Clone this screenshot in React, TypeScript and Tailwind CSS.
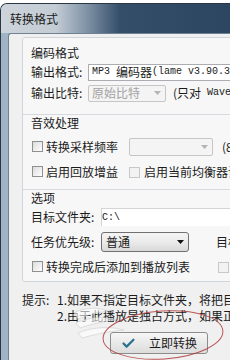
import { Check } from 'lucide-react';

const cjk = "font-['Noto_Sans_CJK_SC',sans-serif]";
const mono = "font-['Liberation_Mono','Noto_Sans_CJK_SC',monospace] text-[10px] whitespace-pre";

function CheckBox({ disabled }: { disabled?: boolean }) {
  return (
    <span
      className={
        'inline-block w-[11px] h-[11px] shrink-0 border ' +
        (disabled
          ? 'border-[#c8c8c8] bg-[#f2f2f2]'
          : 'border-[#8e8f8f] bg-gradient-to-br from-[#dcdcdc] to-[#ffffff]')
      }
    />
  );
}

function Arrow({ dim }: { dim?: boolean }) {
  return (
    <svg width="7" height="4" viewBox="0 0 7 4" className="shrink-0">
      <path d="M0 0h7L3.5 4z" fill={dim ? '#b4b4b4' : '#111'} />
    </svg>
  );
}

function Section({ title, children, last }: { title: string; children: React.ReactNode; last?: boolean }) {
  return (
    <div className={'pl-[8px] ' + (last ? '' : 'border-b border-[#d6dadf]')}>
      <div className="h-[16px] flex items-center text-[12px] leading-none">{title}</div>
      {children}
    </div>
  );
}

export default function App() {
  return (
    <div className={`relative w-[230px] h-[360px] overflow-hidden bg-white text-[#1b1b1b] ${cjk}`}>
      <div className="mt-[3px] h-[357px] flex flex-col rounded-tl-[7px] border-t border-l border-[#2a3846] bg-gradient-to-r from-[#9fb3c4] via-[#b9cad8] to-[#a9bccc] overflow-hidden">
        {/* title bar */}
        <div className="h-[29px] shrink-0 flex items-center pl-[9px] text-[12px] leading-none bg-[linear-gradient(90deg,#cdd4da_0%,#c3ccd4_24%,#7d90a4_38%,#344d69_52%,#2c4561_100%)]">
          转换格式
        </div>
        <div className="flex flex-1 min-h-0">
          <div className="w-[7px] shrink-0" />
          <div className="flex-1 min-w-0 bg-[#f0f0f0] border-l border-t border-[#6f8294] rounded-tl-[3px] flex flex-col">
            {/* group box */}
            <div className="ml-[13px] mt-[3px] w-[240px] border border-[#d0d5da] rounded-[3px] bg-[#f7f7f7] pt-[7px]">
              <Section title="编码格式">
                <div className="mt-[2px] h-[18px] flex items-center text-[12px] leading-none">
                  <span className="w-[57px] shrink-0">输出格式:</span>
                  <div className="flex-1 h-[17px] border border-[#abadb3] bg-white flex items-center pl-[3px] whitespace-nowrap">
                    <span className={mono}>MP3 </span>
                    <span className="text-[12px]">编码器</span>
                    <span className={mono}>(lame v3.90.3</span>
                  </div>
                </div>
                <div className="mt-[3px] h-[18px] flex items-center text-[12px] leading-none whitespace-nowrap">
                  <span className="w-[57px] shrink-0">输出比特:</span>
                  <div className="w-[78px] h-[17px] shrink-0 border border-[#c6c6c6] bg-[#f4f4f4] rounded-[2px] flex items-center pl-[3px] pr-[4px] text-[#a3a3a3]">
                    <span className="flex-1">原始比特</span>
                    <Arrow dim />
                  </div>
                  <span className="ml-[7px]">(</span>
                  <span>只对</span>
                  <span className={mono}> Wave</span>
                </div>
                <div className="h-[12px]" />
              </Section>
              <Section title="音效处理">
                <div className="h-[5px]" />
                <div className="mt-[2px] h-[18px] flex items-center text-[12px] leading-none whitespace-nowrap">
                  <span className="ml-[1px]"><CheckBox /></span>
                  <span className="ml-[3px] w-[83px] shrink-0">转换采样频率</span>
                  <div className="w-[84px] h-[18px] shrink-0 border border-[#c6c6c6] bg-[#f4f4f4] rounded-[2px] flex items-center justify-end pr-[4px]">
                    <Arrow dim />
                  </div>
                  <span className="ml-[9px]">(8</span>
                </div>
                <div className="mt-[7px] h-[18px] flex items-center text-[12px] leading-none whitespace-nowrap">
                  <span className="ml-[1px]"><CheckBox /></span>
                  <span className="ml-[3px] w-[83px] shrink-0">启用回放增益</span>
                  <CheckBox disabled />
                  <span className="ml-[4px]">启用当前均衡器设</span>
                </div>
                <div className="h-[8px]" />
              </Section>
              <Section title="选项" last>
                <div className="mt-[2px] h-[18px] flex items-center text-[12px] leading-none whitespace-nowrap">
                  <span className="w-[70px] shrink-0">目标文件夹:</span>
                  <div className="flex-1 h-[18px] border-t border-l border-[#d2d4d8] bg-white flex items-center">
                    <span className={mono}>C:\</span>
                  </div>
                </div>
                <div className="mt-[6px] h-[20px] flex items-center text-[12px] leading-none whitespace-nowrap">
                  <span className="w-[70px] shrink-0">任务优先级:</span>
                  <div className="w-[88px] h-[20px] shrink-0 border border-[#707070] rounded-[3px] bg-gradient-to-b from-[#f4f4f4] via-[#ebebeb] to-[#d8d8d8] flex items-center pl-[4px] pr-[4px]">
                    <span className="flex-1">普通</span>
                    <Arrow />
                  </div>
                  <span className="ml-[27px]">目标</span>
                </div>
                <div className="mt-[6px] h-[18px] flex items-center text-[12px] leading-none whitespace-nowrap">
                  <span className="ml-[1px]"><CheckBox /></span>
                  <span className="ml-[3px] w-[172px] shrink-0">转换完成后添加到播放列表</span>
                  <CheckBox disabled />
                </div>
                <div className="h-[5px]" />
              </Section>
            </div>
            {/* hints */}
            <div className="mt-[10px] ml-[13px] text-[12px] leading-[16px] whitespace-nowrap">
              <div className="flex">
                <span className="w-[35px] shrink-0">提示:</span>
                <span>1.如果不指定目标文件夹，将把目</span>
              </div>
              <div className="flex">
                <span className="w-[35px] shrink-0" />
                <span>2.由于此播放是独占方式，如果正</span>
              </div>
            </div>
            {/* button */}
            <div className="mt-[8px] ml-[101px] w-[98px] h-[22px] border border-[#8c8c8c] rounded-[3px] bg-gradient-to-b from-[#f6f6f6] to-[#dcdcdc] flex items-center pl-[10px] text-[12px] leading-none">
              <Check size={15} strokeWidth={3.5} className="text-[#2a6f8e]" />
              <span className="ml-[13px]">立即转换</span>
            </div>
          </div>
        </div>
      </div>
      {/* watermark */}
      <svg className="absolute left-[68px] top-[305px] pointer-events-none" width="70" height="36" viewBox="0 0 70 36">
        <g fill="#ffffff" fillOpacity="0.6" stroke="#b0b0b0" strokeOpacity="0.6" strokeWidth="0.6">
          <path d="M6 8c10-6 24-6 34-2-10 1-20 4-30 8z" />
          <path d="M8 18c12-6 28-7 40-3-12 1-24 4-36 8z" />
          <path d="M10 28c14-6 32-7 46-3-14 1-28 4-42 8z" />
        </g>
      </svg>
      {/* red annotation */}
      <svg className="absolute left-0 top-0 pointer-events-none" width="230" height="360" viewBox="0 0 230 360">
        <ellipse cx="163" cy="335" rx="60" ry="24" transform="rotate(-4 163 335)" fill="none" stroke="#b03a3a" strokeWidth="1" strokeOpacity="0.85" />
      </svg>
    </div>
  );
}
